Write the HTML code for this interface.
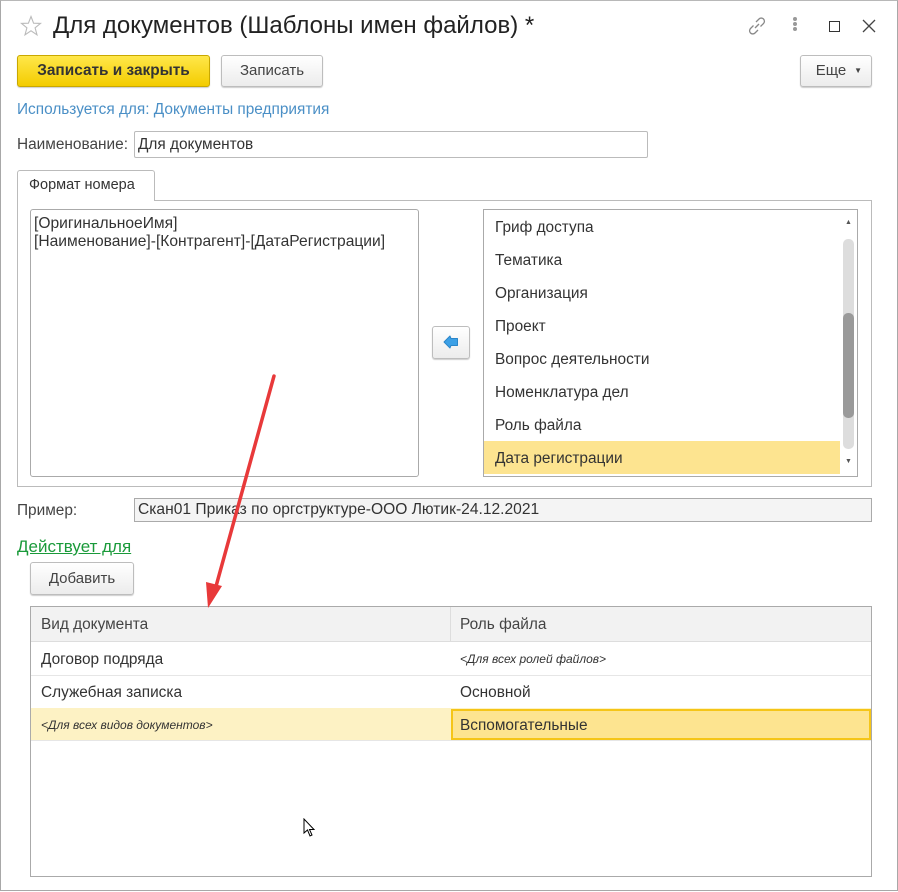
<!DOCTYPE html>
<html><head><meta charset="utf-8"><style>
*{box-sizing:border-box;margin:0;padding:0}
body{width:898px;height:892px;background:#fff;font-family:"Liberation Sans","Noto Sans CJK SC",sans-serif;position:relative;overflow:hidden;color:#333}
.a{position:absolute}
.win{left:0;top:0;width:898px;height:891px;border:1px solid #a8a8a8;border-top-color:#b8b8b8}
.btn{position:absolute;border:1px solid #bdbdbd;border-radius:3px;background:linear-gradient(#fff,#ececec);box-shadow:0 1px 1px rgba(0,0,0,.2);font-size:15px;color:#444;text-align:center}
.t{font-size:15.4px;color:#333;white-space:nowrap}
.row{position:absolute;left:11px;font-size:15.4px;color:#333}
</style></head><body>
<div class="a win"></div>
<!-- title -->
<svg class="a" style="left:20px;top:15px" width="22" height="22" viewBox="0 0 22 22"><polygon points="11,1.5 13.6,8.2 20.5,8.4 15.1,12.8 17,19.8 11,15.8 5,19.8 6.9,12.8 1.5,8.4 8.4,8.2" fill="none" stroke="#bbb" stroke-width="1.1"/></svg>
<div class="a" style="left:53px;top:12px;font-size:24px;color:#222;white-space:nowrap">Для документов (Шаблоны имен файлов) *</div>
<svg class="a" style="left:745px;top:15px" width="24" height="22" viewBox="0 0 24 22"><g fill="none" stroke="#888" stroke-width="1.3"><path d="M10 13 L14 9"/><path d="M11 7 l3-3 a3 3 0 0 1 4.5 4.5 l-3 3"/><path d="M13 15 l-3 3 a3 3 0 0 1 -4.5-4.5 l3-3"/></g></svg>
<div class="a" style="left:793px;top:17px;width:4px;height:4px;background:#999;border-radius:2px;box-shadow:0 5px 0 #999,0 10px 0 #999"></div>
<div class="a" style="left:829px;top:21px;width:11px;height:11px;border:1.3px solid #333"></div>
<svg class="a" style="left:862px;top:19px" width="14" height="14" viewBox="0 0 14 14"><path d="M1 1 L13 13 M13 1 L1 13" stroke="#444" stroke-width="1.3"/></svg>
<!-- buttons -->
<div class="btn" style="left:17px;top:55px;width:193px;height:32px;background:linear-gradient(#ffe74a,#f3cc00);border-color:#c9a800;font-weight:bold;color:#333;line-height:30px;font-size:15.4px">Записать и закрыть</div>
<div class="btn" style="left:221px;top:55px;width:102px;height:32px;line-height:30px">Записать</div>
<div class="btn" style="left:800px;top:55px;width:72px;height:32px;line-height:30px;padding-right:10px">Еще<span style="position:absolute;right:9px;top:0;font-size:8px">▼</span></div>
<div class="a t" style="left:17px;top:101px;color:#4a8fc6">Используется для: Документы предприятия</div>
<div class="a t" style="left:17px;top:136px;color:#444">Наименование:</div>
<div class="a" style="left:134px;top:131px;width:514px;height:27px;border:1px solid #bbb;border-radius:2px"></div>
<div class="a t" style="left:138px;top:136px">Для документов</div>
<!-- tabs -->
<div class="a" style="left:17px;top:200px;width:855px;height:287px;border:1px solid #bbb"></div>
<div class="a" style="left:17px;top:170px;width:138px;height:31px;border:1px solid #bbb;border-bottom:none;border-radius:3px 3px 0 0;background:#fff;font-size:14.5px;line-height:29px;padding-left:11px;color:#333">Формат номера</div>
<div class="a" style="left:30px;top:209px;width:389px;height:268px;border:1px solid #aaa;border-radius:3px;padding:5px 3px;font-size:15.6px;line-height:18px;color:#333">[ОригинальноеИмя]<br>[Наименование]-[Контрагент]-[ДатаРегистрации]</div>
<div class="btn" style="left:432px;top:326px;width:38px;height:33px"></div>
<svg class="a" style="left:442px;top:333px" width="18" height="18" viewBox="0 0 18 18"><path d="M2 9 L8 3 L9 5.5 L15.5 5.5 L15.5 12.5 L9 12.5 L8 15 Z" fill="#3ca0e6" stroke="#2b86c9" stroke-width="1" stroke-linejoin="round"/></svg>
<div class="a" style="left:483px;top:209px;width:375px;height:268px;border:1px solid #aaa;overflow:hidden">
<div class="a" style="left:0;top:231px;width:356px;height:33px;background:#fde490"></div>
<div class="row" style="top:9px">Гриф доступа</div>
<div class="row" style="top:42px">Тематика</div>
<div class="row" style="top:75px">Организация</div>
<div class="row" style="top:108px">Проект</div>
<div class="row" style="top:141px">Вопрос деятельности</div>
<div class="row" style="top:174px">Номенклатура дел</div>
<div class="row" style="top:207px">Роль файла</div>
<div class="row" style="top:240px">Дата регистрации</div>
<div class="a" style="left:359px;top:29px;width:11px;height:210px;background:#ddd;border-radius:5px"></div>
<div class="a" style="left:359px;top:103px;width:11px;height:105px;background:#9a9a9a;border-radius:5px"></div>
<div class="a" style="left:361px;top:9px;font-size:7px;color:#555">▲</div>
<div class="a" style="left:361px;top:248px;font-size:7px;color:#555">▼</div>
</div>
<div class="a t" style="left:17px;top:502px;color:#444">Пример:</div>
<div class="a" style="left:134px;top:498px;width:738px;height:24px;border:1px solid #aaa;background:#f4f4f4;font-size:15.6px;line-height:22px;padding-left:3px;color:#333;white-space:nowrap">Скан01 Приказ по оргструктуре-ООО Лютик-24.12.2021</div>
<div class="a" style="left:17px;top:537px;font-size:17px;color:#1a9a3a;text-decoration:underline;white-space:nowrap">Действует для</div>
<div class="btn" style="left:30px;top:562px;width:104px;height:33px;line-height:31px">Добавить</div>
<!-- table -->
<div class="a" style="left:30px;top:606px;width:842px;height:271px;border:1px solid #aaa">
<div class="a" style="left:0;top:0;width:840px;height:35px;background:#f2f2f2;border-bottom:1px solid #ddd"></div>
<div class="a" style="left:419px;top:0;width:1px;height:35px;background:#ddd"></div>
<div class="a t" style="left:10px;top:9px;color:#444">Вид документа</div>
<div class="a t" style="left:429px;top:9px;color:#444">Роль файла</div>
<div class="a" style="left:0;top:68px;width:840px;height:1px;background:#e6e6e6"></div>
<div class="a" style="left:0;top:101px;width:840px;height:33px;background:#fdf2c4;border-bottom:1px solid #e6e6e6"></div>
<div class="a" style="left:420px;top:102px;width:420px;height:31px;background:#fde490;border:2px solid #f5c518"></div>
<div class="a t" style="left:10px;top:44px">Договор подряда</div>
<div class="a t" style="left:429px;top:45px;font-size:12px;font-style:italic">&lt;Для всех ролей файлов&gt;</div>
<div class="a t" style="left:10px;top:77px">Служебная записка</div>
<div class="a t" style="left:429px;top:77px">Основной</div>
<div class="a t" style="left:10px;top:111px;font-size:12px;font-style:italic">&lt;Для всех видов документов&gt;</div>
<div class="a t" style="left:429px;top:110px">Вспомогательные</div>
</div>
<!-- red arrow -->
<svg class="a" style="left:0;top:0" width="898" height="892"><line x1="274" y1="376" x2="215" y2="590" stroke="#e8393a" stroke-width="3.5" stroke-linecap="round"/><polygon points="208,608 206,582 222,586" fill="#e8393a"/></svg>
<!-- cursor -->
<svg class="a" style="left:303px;top:818px" width="14" height="20" viewBox="0 0 14 20"><path d="M1 1 L1 15 L4.5 12 L7 18 L9 17 L6.5 11.5 L11 11.5 Z" fill="#fff" stroke="#000" stroke-width="1"/></svg>
</body></html>
